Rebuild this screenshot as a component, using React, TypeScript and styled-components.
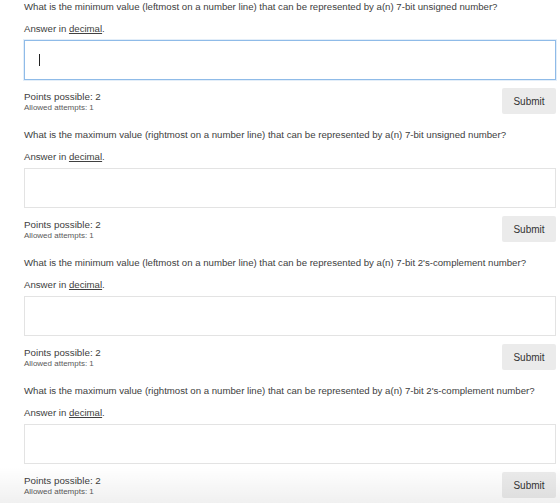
import React from "react";
import styled, { createGlobalStyle } from "styled-components";

const GlobalStyle = createGlobalStyle`
  html, body {
    margin: 0;
    padding: 0;
    background: #ffffff;
    overflow: hidden;
  }
  body {
    font-family: "Liberation Sans", Arial, Helvetica, sans-serif;
    color: #333333;
  }
`;

const Page = styled.div`
  width: 560px;
  height: 503px;
  padding: 0 4px 0 24px;
  box-sizing: border-box;
  overflow: hidden;
  position: relative;
`;

const Block = styled.section`
  height: 128px;
  display: flex;
  flex-direction: column;
`;

const Prompt = styled.p`
  margin: 0;
  font-size: 9.65px;
  line-height: 14px;
  color: #404040;
  white-space: nowrap;
`;

const Hint = styled(Prompt)`
  margin-top: 8px;

  u {
    text-decoration: underline;
    text-underline-offset: 1px;
  }
`;

const AnswerBox = styled.div<{ $focused?: boolean }>`
  margin-top: 4px;
  height: 40px;
  box-sizing: border-box;
  border: 1px solid ${(p) => (p.$focused ? "#8fbbe8" : "#e3e3e3")};
  box-shadow: ${(p) => (p.$focused ? "0 0 0 1px rgba(143,187,232,0.25)" : "none")};
  background: #fff;
  display: flex;
  align-items: center;
  padding-left: 14px;
`;

const Caret = styled.span`
  width: 1px;
  height: 12px;
  background: #222;
`;

const Footer = styled.div`
  margin-top: 7px;
  height: 28px;
  display: flex;
  align-items: center;
  justify-content: space-between;
`;

const Meta = styled.div`
  display: flex;
  flex-direction: column;
`;

const Points = styled.span`
  font-size: 9.8px;
  line-height: 13px;
  color: #404040;
`;

const Attempts = styled.span`
  font-size: 8px;
  line-height: 10px;
  color: #595959;
`;

const SubmitButton = styled.button`
  width: 54px;
  height: 26px;
  border: none;
  border-radius: 2px;
  background: #ebebeb;
  color: #333;
  font-family: "Liberation Sans", Arial, Helvetica, sans-serif;
  font-size: 10px;
  padding: 0;
`;

const BottomFade = styled.div`
  position: absolute;
  left: 0;
  right: 0;
  bottom: 0;
  height: 36px;
  background: linear-gradient(to bottom, rgba(0, 0, 0, 0), rgba(0, 0, 0, 0.06));
  pointer-events: none;
`;

const questions = [
  "What is the minimum value (leftmost on a number line) that can be represented by a(n) 7-bit unsigned number?",
  "What is the maximum value (rightmost on a number line) that can be represented by a(n) 7-bit unsigned number?",
  "What is the minimum value (leftmost on a number line) that can be represented by a(n) 7-bit 2's-complement number?",
  "What is the maximum value (rightmost on a number line) that can be represented by a(n) 7-bit 2's-complement number?",
];

export default function App() {
  return (
    <Page>
      <GlobalStyle />
      {questions.map((q, i) => (
        <Block key={i}>
          <Prompt>{q}</Prompt>
          <Hint>
            Answer in <u>decimal</u>.
          </Hint>
          <AnswerBox $focused={i === 0}>{i === 0 && <Caret />}</AnswerBox>
          <Footer>
            <Meta>
              <Points>Points possible: 2</Points>
              <Attempts>Allowed attempts: 1</Attempts>
            </Meta>
            <SubmitButton>Submit</SubmitButton>
          </Footer>
        </Block>
      ))}
      <BottomFade />
    </Page>
  );
}
